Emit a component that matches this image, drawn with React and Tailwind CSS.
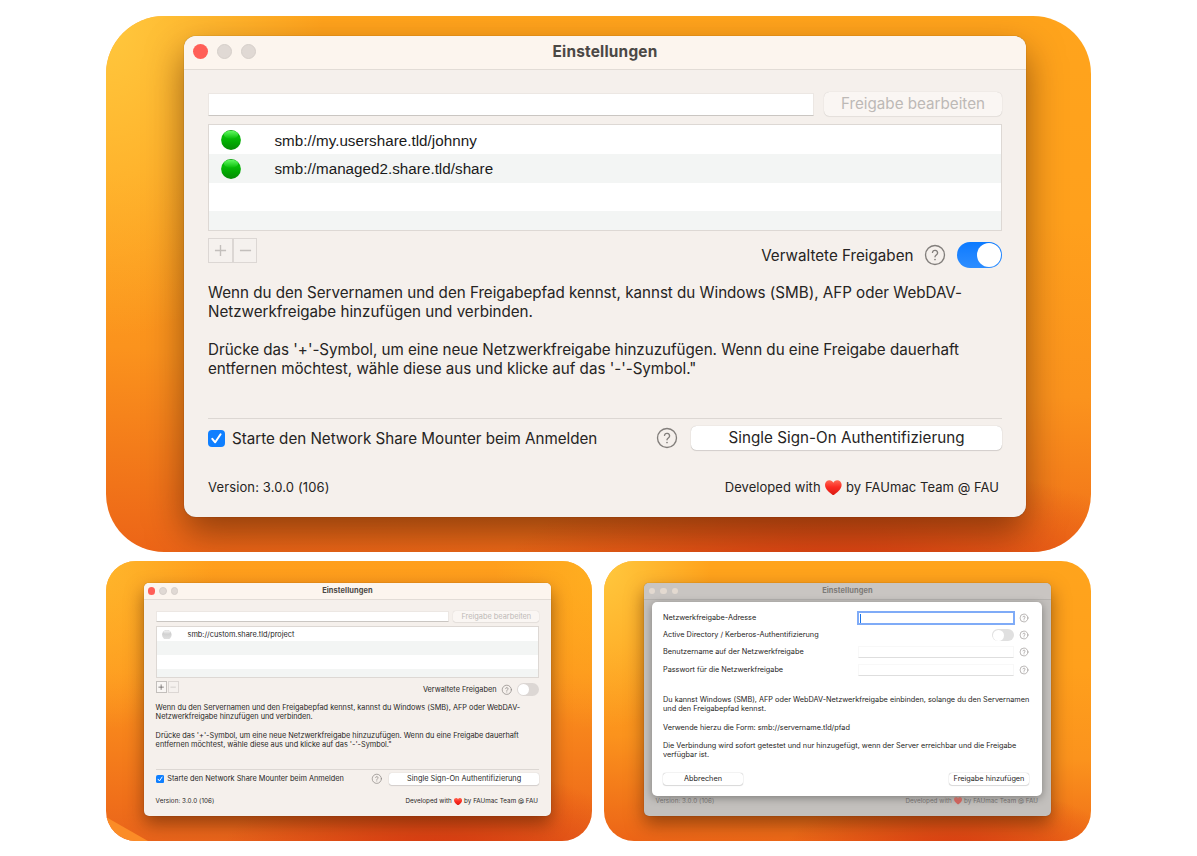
import React from "react";

function HelpIcon({ className }) {
  return (
    <svg viewBox="0 0 24 24" className={className} fill="none" stroke="currentColor" strokeWidth="1.35" strokeLinecap="round">
      <circle cx="12" cy="12" r="9.5" />
      <path d="M9.500 9.300a2.600 2.600 0 0 1 5.100.6c0 1.900-2.600 2.100-2.600 3.900" />
      <path d="M12 16.500h.01" strokeWidth="1.7" />
    </svg>
  );
}

function Heart({ className }) {
  return (
    <svg viewBox="0 0 32 30" className={className}>
      <defs>
        <linearGradient id="heart" x1="0" y1="0" x2="0" y2="1">
          <stop offset="0" stopColor="#ff6a55" />
          <stop offset="0.45" stopColor="#fb2c23" />
          <stop offset="1" stopColor="#d81a12" />
        </linearGradient>
      </defs>
      <path fill="url(#heart)" d="M16 29.5C10.500 25 0 18.500 0 9 0 3.500 4 0 8.500 0 12 0 14.800 1.800 16 5 17.200 1.800 20 0 23.500 0 28 0 32 3.500 32 9 32 18.500 21.500 25 16 29.500Z" />
    </svg>
  );
}

function Orb({ on }) {
  return (
    <svg viewBox="0 0 20 20" className="ml-[1.2em] size-[2em] shrink-0">
      <defs>
        <linearGradient id={on ? "orbOn" : "orbOff"} x1="0" y1="0" x2="0" y2="1">
          <stop offset="0" stopColor={on ? "#0a9a0a" : "#c4c4c4"} />
          <stop offset="0.35" stopColor={on ? "#08bd08" : "#cfcfcf"} />
          <stop offset="0.65" stopColor={on ? "#02a702" : "#d8d8d8"} />
          <stop offset="1" stopColor={on ? "#078a07" : "#e0e0e0"} />
        </linearGradient>
        <linearGradient id={on ? "shineOn" : "shineOff"} x1="0" y1="0" x2="0" y2="1">
          <stop offset="0" stopColor={on ? "#62fa62" : "#f4f4f4"} />
          <stop offset="1" stopColor={on ? "#08bd08" : "#d2d2d2"} />
        </linearGradient>
      </defs>
      <circle cx="10" cy="10" r="9.9" fill={on ? "url(#orbOn)" : "url(#orbOff)"} />
      <ellipse cx="10" cy="4.700" rx="7.200" ry="4" fill={on ? "url(#shineOn)" : "url(#shineOff)"} />
    </svg>
  );
}

function Toggle({ on }) {
  return on ? (
    <span className="flex h-[2.65em] w-[4.55em] items-center justify-end rounded-full bg-linear-to-b from-[#0a7aff] to-[#2c8dff] pr-[0.1em]">
      <span className="size-[2.45em] rounded-full bg-white" />
    </span>
  ) : (
    <span className="flex h-[2.65em] w-[4.55em] items-center rounded-full bg-[#dcd7d4] pl-[0.1em]">
      <span className="size-[2.35em] rounded-full bg-white" />
    </span>
  );
}

function SquareButton({ minus, active }) {
  return (
    <span
      className={
        active
          ? "flex size-[2.45em] items-center justify-center border border-[#c3bfbc] bg-[#f9f6f4] text-[#55514f]"
          : "flex size-[2.45em] items-center justify-center border border-[#dcd7d4] bg-[#f5f1ee] text-[#c3bfbc]"
      }
    >
      <svg viewBox="0 0 14 14" className="size-[1.3em]" stroke="currentColor" strokeWidth="1.5">
        <path d={minus ? "M1 7h12" : "M1 7h12M7 1v12"} />
      </svg>
    </span>
  );
}

function Stoplight({ red, dim }) {
  return (
    <span
      className={
        red
          ? "size-[1.5em] rounded-full bg-[#ff5f57]"
          : dim
            ? "size-[1.3em] rounded-full bg-[#e3d9d0]"
            : "size-[1.5em] rounded-full border-[0.08em] border-[#d5cec9] bg-[#e0d9d4]"
      }
    />
  );
}

function WindowContent({ small, shares, managed, canAdd }) {
  return (
    <>
      <div className="mt-[2.25em] flex h-[2.4em] items-center justify-between">
        <div className="h-[2.3em] w-[60.6em] border border-[#ece7e3] border-b-[#cac6c2] bg-white" />
        <div className="flex h-[2.4em] w-[17.8em] items-center justify-center rounded-[0.55em] bg-[#faf6f3] shadow-[0_0_1px_rgba(0,0,0,0.2),0_1px_1px_rgba(0,0,0,0.05)]">
          <span className="text-[1.52em] leading-none whitespace-nowrap text-[#bdb9b6]">Freigabe bearbeiten</span>
        </div>
      </div>

      <div className="mt-[0.8em] h-[10.7em] overflow-hidden border border-[#ddd8d4] bg-white pt-[0.1em]">
        {[0, 1, 2, 3].map((i) => (
          <div key={i} className={i % 2 ? "flex h-[2.84em] items-center bg-[#f3f5f4]" : "flex h-[2.84em] items-center bg-white"}>
            {shares[i] && (
              <>
                <Orb on={managed} />
                <span
                  className={
                    small
                      ? "ml-[2.1em] text-[1.52em] leading-none text-[#1d1d1d]"
                      : "ml-[2.2em] font-['Liberation_Sans',Arial,sans-serif] text-[15.2px] leading-none tracking-[0.03px] text-[#1a1a1a]"
                  }
                >
                  {shares[i]}
                </span>
              </>
            )}
          </div>
        ))}
      </div>

      <div className="mt-[0.7em] flex h-[3.1em] justify-between">
        <div className="flex gap-[0.04em]">
          <SquareButton active={canAdd} />
          <SquareButton minus />
        </div>
        <div className="mt-[0.35em] flex h-[2.7em] items-center">
          <span className="mt-[0.1em] text-[1.52em] leading-none">Verwaltete Freigaben</span>
          <HelpIcon className="ml-[0.95em] size-[2.4em] text-[#827e7b]" />
          <span className="ml-[0.95em]">
            <Toggle on={managed} />
          </span>
        </div>
      </div>

      <div className="mt-[1.4em] h-[9.5em]">
        <p className="text-[1.52em] leading-[1.25] tracking-[-0.0015em] whitespace-nowrap">
          Wenn du den Servernamen und den Freigabepfad kennst, kannst du Windows (SMB), AFP oder WebDAV-
          <br />
          Netzwerkfreigabe hinzufügen und verbinden.
          <br />
          <br />
          Drücke das '+'-Symbol, um eine neue Netzwerkfreigabe hinzuzufügen. Wenn du eine Freigabe dauerhaft
          <br />
          entfernen möchtest, wähle diese aus und klicke auf das '-'-Symbol."
        </p>
      </div>

      <div className="mt-[4em] border-t border-[#dcd7d3]" />
      <div className="mt-[0.7em] flex h-[2.4em] items-center">
        <svg viewBox="0 0 17 17" className="size-[1.7em] shrink-0">
          <rect width="17" height="17" rx="4" fill="#0f7fff" />
          <path d="M4.300 8.800 7.200 12.300 12.600 4.300" fill="none" stroke="#fff" strokeWidth="2" strokeLinecap="round" strokeLinejoin="round" />
        </svg>
        <span className="mt-[0.1em] ml-[0.46em] text-[1.52em] leading-none tracking-[-0.001em] whitespace-nowrap">
          Starte den Network Share Mounter beim Anmelden
        </span>
        <HelpIcon className="ml-auto size-[2.4em] text-[#827e7b]" />
        <div className="ml-[1.2em] flex h-[2.4em] w-[31.1em] items-center justify-center rounded-[0.55em] bg-white shadow-[0_0_1px_rgba(0,0,0,0.25),0_1px_1px_rgba(0,0,0,0.12)]">
          <span className="text-[1.52em] leading-none tracking-[0.002em] whitespace-nowrap">Single Sign-On Authentifizierung</span>
        </div>
      </div>
    </>
  );
}

function SettingsWindow({ small, inactive, shares, managed, canAdd }) {
  return (
    <div
      className={
        (small
          ? "h-[233px] w-[407px] rounded-[5px] text-[4.84px] shadow-[0_0_1px_rgba(0,0,0,0.45),0_8px_18px_rgba(60,20,0,0.5)]"
          : "h-[481px] w-[842px] rounded-[12px] text-[10px] shadow-[0_0_1px_rgba(0,0,0,0.5),0_16px_36px_rgba(60,20,0,0.52)]") +
        (inactive ? " bg-[#c3c0bd] text-[#7d7a78]" : " bg-[#f5f0ec] text-[#262423]") +
        " flex flex-col overflow-hidden"
      }
    >
      <div
        className={
          "grid shrink-0 grid-cols-[1fr_auto_1fr] items-center border-b " +
          (small ? "h-[3.5em] " : "h-[3.35em] pb-[0.15em] ") +
          (inactive ? "border-[#b5b2af] bg-[#c9c5c2] text-[#7d7a78]" : "border-[#e2dcd6] bg-[#fcf5ee] text-[#4b4845]")
        }
      >
        <div className={inactive ? "flex gap-[1.08em] pl-[1em]" : small ? "flex gap-[0.88em] pl-[0.8em]" : "flex gap-[0.88em] pl-[0.9em]"}>
          <Stoplight red={!inactive} dim={inactive} />
          <Stoplight dim={inactive} />
          <Stoplight dim={inactive} />
        </div>
        <div className="text-[1.54em] leading-none font-bold tracking-[0.013em]">Einstellungen</div>
      </div>

      <div className="flex flex-col px-[2.4em]">
        {inactive ? (
          <div className="h-[38.1em]" />
        ) : (
          <WindowContent small={small} shares={shares} managed={managed} canAdd={canAdd} />
        )}
        <div className={"flex h-[2em] items-center justify-between pr-[0.3em] " + (small ? "mt-[2.5em]" : "mt-[2.75em]")}>
          <span className="text-[1.3em] leading-none tracking-[0.01em]">Version: 3.0.0 (106)</span>
          <span className="flex items-center text-[1.3em] leading-none tracking-[0.004em] whitespace-nowrap">
            Developed with
            <Heart className={"mx-[0.34em] h-[1.22em] w-[1.28em]" + (inactive ? " opacity-55" : "")} />
            by FAUmac Team @ FAU
          </span>
        </div>
      </div>
    </div>
  );
}

function FormRow({ label, className, children }) {
  return (
    <div className={"flex items-center " + className}>
      <span className="flex-1 whitespace-nowrap">{label}</span>
      {children}
      <HelpIcon className="ml-[4.500px] size-[10px] text-[#85817f]" />
    </div>
  );
}

function AddShareSheet() {
  return (
    <div className="absolute top-[18.500px] left-[7.500px] flex h-[194.500px] w-[390px] flex-col rounded-[5px] bg-white pr-[12.500px] pl-[11.500px] text-[7.3px] leading-[9.200px] text-[#262423] shadow-[0_2px_8px_rgba(0,0,0,0.35)]">
      <div className="mt-[8px] flex flex-col">
        <FormRow label="Netzwerkfreigabe-Adresse" className="h-[17px]">
          <div className="flex h-[14px] w-[158px] items-center border-2 border-[#7fabf7] bg-white pl-[1px]">
            <span className="h-[9px] w-px bg-[#1a73e8]" />
          </div>
        </FormRow>
        <FormRow label="Active Directory / Kerberos-Authentifizierung" className="h-[17px]">
          <span className="mr-[1px] flex h-[12.500px] w-[22px] items-center rounded-full bg-[#e0e0e0] pl-px">
            <span className="size-[11px] rounded-full bg-white" />
          </span>
        </FormRow>
        <FormRow label="Benutzername auf der Netzwerkfreigabe" className="h-[17px]">
          <div className="mr-[1px] h-[12px] w-[156px] border border-[#f8f8f8] border-b-[#dedede]" />
        </FormRow>
        <FormRow label="Passwort für die Netzwerkfreigabe" className="h-[18px]">
          <div className="mr-[1px] h-[12px] w-[156px] border border-[#f8f8f8] border-b-[#dedede]" />
        </FormRow>
      </div>
      <p className="mt-[16.500px] whitespace-nowrap">
        Du kannst Windows (SMB), AFP oder WebDAV-Netzwerkfreigabe einbinden, solange du den Servernamen
        <br />
        und den Freigabepfad kennst.
        <br />
        <br />
        Verwende hierzu die Form: smb://servername.tld/pfad
        <br />
        <br />
        Die Verbindung wird sofort getestet und nur hinzugefügt, wenn der Server erreichbar und die Freigabe
        <br />
        verfügbar ist.
      </p>
      <div className="mt-[13.500px] flex justify-between">
        <div className="flex h-[12px] w-[80px] items-center justify-center rounded-[3px] bg-white shadow-[0_0_1px_rgba(0,0,0,0.35),0_0.500px_1px_rgba(0,0,0,0.12)]">
          Abbrechen
        </div>
        <div className="flex h-[12px] w-[80px] items-center justify-center rounded-[3px] bg-white whitespace-nowrap shadow-[0_0_1px_rgba(0,0,0,0.35),0_0.500px_1px_rgba(0,0,0,0.12)]">
          Freigabe hinzufügen
        </div>
      </div>
    </div>
  );
}

export default function App() {
  return (
    <main className="flex h-[856px] w-[1197px] flex-col gap-[9px] overflow-hidden bg-white pt-[16px] pl-[106px] font-['Inter',sans-serif]">
      <section className="h-[536px] w-[985px] overflow-hidden rounded-[58px] bg-[linear-gradient(183deg,#ffa41c_0%,#ffa01c_35%,#fb931d_65%,#ec6417_100%)]">
        <div className="h-full bg-[radial-gradient(ellipse_22%_60%_at_0%_0%,#ffc83e,#ffc83e00),radial-gradient(ellipse_35%_22%_at_75%_105%,#d93a12,#d93a1200)] pt-[20px] pl-[78px]">
          <SettingsWindow shares={["smb://my.usershare.tld/johnny", "smb://managed2.share.tld/share"]} managed />
        </div>
      </section>
      <div className="flex gap-[12px]">
        <section className="h-[280px] w-[486px] overflow-hidden rounded-[30px] bg-[linear-gradient(180deg,#ff9f1c_0%,#fd951d_40%,#f0701a_85%,#e9641b_100%)]">
          <div className="relative h-full bg-[radial-gradient(ellipse_22%_60%_at_0%_0%,#ffb52b,#ffb52b00),radial-gradient(ellipse_20%_60%_at_100%_0%,#ffae20,#ffae2000),radial-gradient(ellipse_45%_35%_at_68%_108%,#d63510,#d6351000)] pt-[22px] pl-[38px]">
            <svg viewBox="0 0 42 24" className="absolute bottom-0 left-0 h-[24px] w-[42px]">
              <path d="M0 0 42 24H0Z" fill="#fb8c27" />
            </svg>
            <SettingsWindow small shares={["smb://custom.share.tld/project"]} canAdd />
          </div>
        </section>
        <section className="h-[280px] w-[487px] overflow-hidden rounded-[30px] bg-[linear-gradient(183deg,#ffa41c_0%,#ffa01c_35%,#fb931d_65%,#ec6417_100%)]">
          <div className="h-full bg-[radial-gradient(ellipse_22%_60%_at_0%_0%,#ffc83e,#ffc83e00),radial-gradient(ellipse_35%_25%_at_72%_105%,#d93a12,#d93a1200)] pt-[22px] pl-[40px]">
            <div className="relative w-[407px]">
              <SettingsWindow small inactive shares={[]} />
              <AddShareSheet />
            </div>
          </div>
        </section>
      </div>
    </main>
  );
}
